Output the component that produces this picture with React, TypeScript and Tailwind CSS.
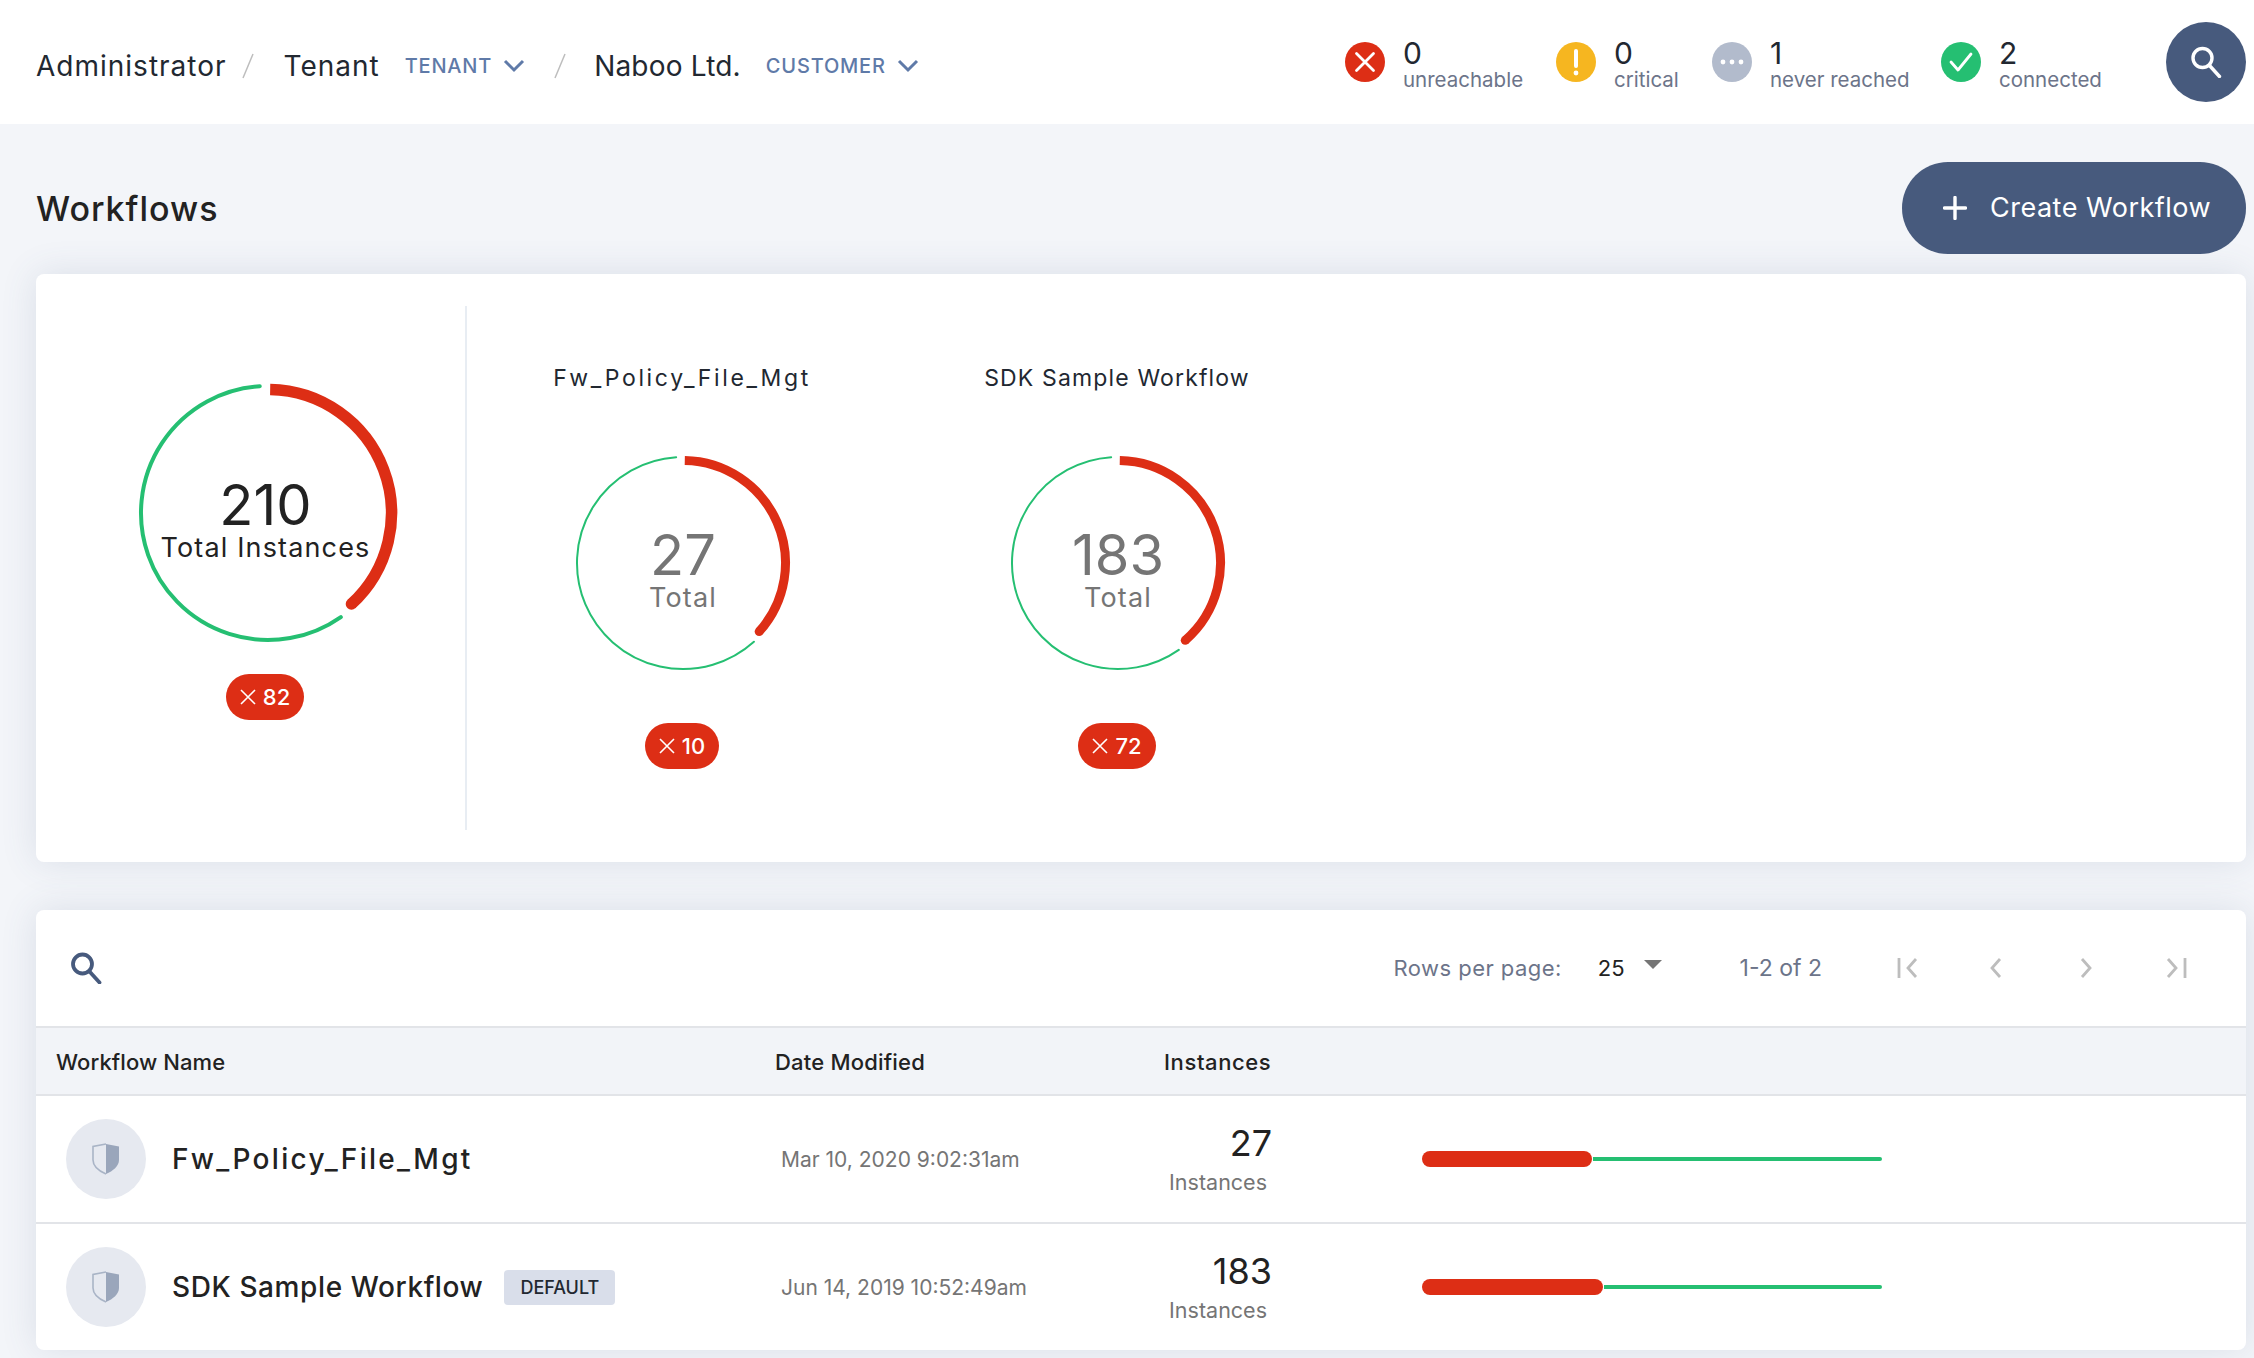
const FONT = "font-['Inter','Noto_Sans',sans-serif]"

const RED = "#dd2e15"
const GREEN = "#25bf72"

function polar(c: number, r: number, deg: number) {
  const a = ((deg - 90) * Math.PI) / 180
  return { x: c + r * Math.cos(a), y: c + r * Math.sin(a) }
}

function arc(c: number, r: number, from: number, to: number) {
  const s = polar(c, r, from)
  const e = polar(c, r, to)
  const large = to - from > 180 ? 1 : 0
  return `M ${s.x} ${s.y} A ${r} ${r} 0 ${large} 1 ${e.x} ${e.y}`
}

function Donut({
  size,
  greenR,
  greenW,
  redR,
  redW,
  redEnd,
  greenStart,
  value,
  label,
  big,
}: {
  size: number
  greenR: number
  greenW: number
  redR: number
  redW: number
  redEnd: number
  greenStart: number
  value: string
  label: string
  big?: boolean
}) {
  const c = size / 2
  const tip = polar(c, redR, redEnd)
  return (
    <div className="relative shrink-0" style={{ width: size, height: size }}>
      <svg width={size} height={size} viewBox={`0 0 ${size} ${size}`} fill="none">
        <path d={arc(c, greenR, greenStart, 356.3)} stroke={GREEN} strokeWidth={greenW} strokeLinecap="round" />
        <path d={arc(c, redR, 1, redEnd)} stroke={RED} strokeWidth={redW} />
        <circle cx={tip.x} cy={tip.y} r={redW / 2} fill={RED} />
      </svg>
      <div
        className={`absolute inset-0 flex flex-col items-center justify-center pt-[14px] ${
          big ? "text-[#222222] pr-[5px]" : "text-[#757575]"
        }`}
      >
        <div className="text-[56px] leading-[56px]">{value}</div>
        <div className="text-[27px] leading-[30px] tracking-[1.15px]">{label}</div>
      </div>
    </div>
  )
}

function FailBadge({ count }: { count: string }) {
  return (
    <div className="flex items-center justify-center gap-[7px] h-[46px] px-[14px] rounded-[23px] bg-[#dd2e15] text-white text-[22px] font-medium">
      <svg width="16" height="16" viewBox="0 0 16 16" fill="none" stroke="white" strokeWidth="1.6">
        <path d="M1 1 L15 15 M15 1 L1 15" />
      </svg>
      {count}
    </div>
  )
}

function SearchGlyph({ size, color, width }: { size: number; color: string; width: number }) {
  return (
    <svg width={size} height={size} viewBox="0 0 32 32" fill="none" stroke={color} strokeWidth={width}>
      <circle cx="12.5" cy="12" r="9.5" />
      <path d="M19.5 19.5 L29.5 30.5" strokeLinecap="round" />
    </svg>
  )
}

function Shield() {
  return (
    <svg width="28" height="32" viewBox="0 0 28 32" fill="none">
      <path d="M14 1 L27 3.5 V17 C27 23 21 28 14 31 Z" fill="#9aa6bb" />
      <path d="M14 1 L1 3.5 V17 C1 23 7 28 14 31" stroke="#a9b4c6" strokeWidth="1.6" />
    </svg>
  )
}

function StatusIcon({ kind }: { kind: string }) {
  if (kind === "red") {
    return (
      <svg width="40" height="40" viewBox="0 0 40 40" className="shrink-0">
        <circle cx="20" cy="20" r="20" fill={RED} />
        <path d="M11.5 11.5 L28.5 28.5 M28.5 11.5 L11.5 28.5" stroke="white" strokeWidth="2.8" strokeLinecap="round" />
      </svg>
    )
  }
  if (kind === "yellow") {
    return (
      <svg width="40" height="40" viewBox="0 0 40 40" className="shrink-0">
        <circle cx="20" cy="20" r="20" fill="#f6b620" />
        <path d="M20 9 V24" stroke="white" strokeWidth="4" strokeLinecap="round" />
        <circle cx="20" cy="31" r="2.4" fill="white" />
      </svg>
    )
  }
  if (kind === "grey") {
    return (
      <svg width="40" height="40" viewBox="0 0 40 40" className="shrink-0">
        <circle cx="20" cy="20" r="20" fill="#b2bbcc" />
        <circle cx="11" cy="20" r="2.4" fill="white" />
        <circle cx="20" cy="20" r="2.4" fill="white" />
        <circle cx="29" cy="20" r="2.4" fill="white" />
      </svg>
    )
  }
  return (
    <svg width="40" height="40" viewBox="0 0 40 40" className="shrink-0">
      <circle cx="20" cy="20" r="20" fill={GREEN} />
      <path d="M10 20 L17 28 L30 12" stroke="white" strokeWidth="2.8" fill="none" strokeLinecap="round" strokeLinejoin="round" />
    </svg>
  )
}

function Status({ kind, count, label, className }: { kind: string; count: string; label: string; className: string }) {
  return (
    <div className={`flex items-center ${className}`}>
      <StatusIcon kind={kind} />
      <div className="ml-[18px] mt-[5px]">
        <div className="text-[30px] leading-[30px] text-[#222831]">{count}</div>
        <div className="text-[20.5px] leading-[24px] text-[#6c7489] whitespace-nowrap">{label}</div>
      </div>
    </div>
  )
}

function Crumb({ name, tag, nameClass }: { name: string; tag?: string; nameClass: string }) {
  return (
    <div className="flex items-center">
      <span className={`text-[28px] text-[#222831] whitespace-nowrap ${nameClass}`}>{name}</span>
      {tag && (
        <>
          <span className="ml-[25px] text-[20px] font-medium tracking-[0.8px] text-[#5f7aa8]">{tag}</span>
          <svg width="22" height="14" viewBox="0 0 22 14" fill="none" stroke="#5f7aa8" strokeWidth="3" className="ml-[11px]">
            <path d="M2 2 L11 11 L20 2" />
          </svg>
        </>
      )}
    </div>
  )
}

function Slash({ className }: { className: string }) {
  return (
    <svg width="12" height="26" viewBox="0 0 12 26" fill="none" stroke="#bdbdbd" strokeWidth="1.5" className={className}>
      <path d="M11 1 L1 25" />
    </svg>
  )
}

function PageIcon({ path, className }: { path: string; className?: string }) {
  return (
    <svg width="24" height="24" viewBox="0 0 24 24" fill="none" stroke="#bdbdbd" strokeWidth="2.8" className={className}>
      <path d={path} />
    </svg>
  )
}

function Row({
  name,
  date,
  count,
  redWidth,
  nameClass,
  tag,
  last,
}: {
  name: string
  date: string
  count: string
  redWidth: number
  nameClass: string
  tag?: boolean
  last?: boolean
}) {
  return (
    <div className={last ? "flex items-center h-[126px]" : "flex items-center h-[128px] border-b-2 border-[#e2e4e8]"}>
      <div className="flex items-center w-[745px] pl-[30px]">
        <div className="flex items-center justify-center w-[80px] h-[80px] rounded-full bg-[#e6e9f0]">
          <Shield />
        </div>
        <span className={`ml-[26px] text-[28px] font-medium text-[#222222] ${nameClass}`}>{name}</span>
        {tag && (
          <span className="ml-[21px] flex items-center h-[35px] px-[16px] rounded-[4px] bg-[#d9deea] text-[18px] font-medium text-[#222831]">
            DEFAULT
          </span>
        )}
      </div>
      <div className="w-[387px] pt-[1px] text-[21px] text-[#757575] whitespace-nowrap">{date}</div>
      <div className="w-[104px] flex flex-col items-end">
        <div className="-mt-[2px] text-[36px] leading-[42px] text-[#222222]">{count}</div>
        <div className="mt-[5px] mr-[5px] text-[21.5px] leading-[26px] text-[#757575]">Instances</div>
      </div>
      <div className="ml-[150px] w-[460px] flex items-center">
        <div className="h-[16px] rounded-[8px] bg-[#dd2e15]" style={{ width: redWidth }} />
        <div className="ml-[1px] flex-1 h-[4px] rounded-r-[2px] bg-[#25bf72]" />
      </div>
    </div>
  )
}

export default function App() {
  return (
    <div className={`${FONT} min-h-screen bg-[#f3f5f9]`}>
      <header className="flex items-center h-[124px] pl-[36px] pr-[8px] bg-white">
        <div className="flex items-center mt-[8px]">
          <Crumb name="Administrator" nameClass="tracking-[1px]" />
          <Slash className="ml-[15px]" />
          <div className="ml-[30px]">
            <Crumb name="Tenant" tag="TENANT" nameClass="tracking-[1px]" />
          </div>
          <Slash className="ml-[29px]" />
          <div className="ml-[28px]">
            <Crumb name="Naboo Ltd." tag="CUSTOMER" nameClass="tracking-[0.2px]" />
          </div>
        </div>
        <div className="ml-auto flex items-center">
          <Status kind="red" count="0" label="unreachable" className="w-[211px]" />
          <Status kind="yellow" count="0" label="critical" className="w-[156px]" />
          <Status kind="grey" count="1" label="never reached" className="w-[229px]" />
          <Status kind="green" count="2" label="connected" className="w-[225px]" />
          <button className="flex items-center justify-center w-[80px] h-[80px] rounded-full bg-[#475a7d]">
            <SearchGlyph size={32} color="white" width={3.4} />
          </button>
        </div>
      </header>

      <div className="flex items-center justify-between h-[150px] pt-[18px] pl-[36px] pr-[8px]">
        <h1 className="text-[34px] font-medium tracking-[1px] text-[#222222]">Workflows</h1>
        <button className="flex items-center h-[92px] w-[344px] pl-[41px] rounded-[46px] bg-[#475a7d] text-white text-[27px] tracking-[0.5px]">
          <svg width="24" height="24" viewBox="0 0 24 24" stroke="white" strokeWidth="3.4" strokeLinecap="round">
            <path d="M12 1.5 V22.5 M1.5 12 H22.5" />
          </svg>
          <span className="ml-[23px] pt-[1px] whitespace-nowrap">Create Workflow</span>
        </button>
      </div>

      <section className="flex ml-[36px] mr-[8px] h-[588px] py-[32px] rounded-[8px] bg-white shadow-[0_0_36px_rgba(71,90,125,0.14)]">
        <div className="w-[431px] pl-[102px] pt-[77px] border-r-2 border-[#e8edf3]">
          <div className="flex flex-col items-center w-[260px]">
            <Donut size={260} greenR={127} greenW={4} redR={123.5} redW={11.5} redEnd={137.5} greenStart={145} value="210" label="Total Instances" big />
            <div className="mt-[31px] mr-[6px]">
              <FailBadge count="82" />
            </div>
          </div>
        </div>
        <div className="flex ml-[65px] gap-[135px] pt-[57px]">
          <div className="flex flex-col items-center w-[300px]">
            <div className="text-[23px] leading-[30px] tracking-[2.65px] text-[#222831] whitespace-nowrap">Fw_Policy_File_Mgt</div>
            <div className="mt-[62px] ml-[2px]">
              <Donut size={216} greenR={106} greenW={2} redR={102.5} redW={9} redEnd={132} greenStart={138} value="27" label="Total" />
            </div>
            <div className="mt-[52px]">
              <FailBadge count="10" />
            </div>
          </div>
          <div className="flex flex-col items-center w-[300px]">
            <div className="text-[23px] leading-[30px] tracking-[1.15px] text-[#222831] whitespace-nowrap">SDK Sample Workflow</div>
            <div className="mt-[62px] ml-[2px]">
              <Donut size={216} greenR={106} greenW={2} redR={102.5} redW={9} redEnd={139} greenStart={145} value="183" label="Total" />
            </div>
            <div className="mt-[52px]">
              <FailBadge count="72" />
            </div>
          </div>
        </div>
      </section>

      <section className="mt-[48px] ml-[36px] mr-[8px] rounded-[8px] bg-white shadow-[0_0_36px_rgba(71,90,125,0.14)] overflow-hidden">
        <div className="flex items-center h-[118px] pl-[34px] pr-[58px] border-b-2 border-[#e2e4e8]">
          <SearchGlyph size={32} color="#475a7d" width={3.8} />
          <div className="ml-auto flex items-center">
            <span className="text-[22px] tracking-[0.45px] text-[#6c7489]">Rows per page:</span>
            <span className="ml-[36px] text-[22px] text-[#222222]">25</span>
            <svg width="18" height="10" viewBox="0 0 18 10" className="ml-[19px] -mt-[6px]">
              <path d="M0 0 H18 L9 9 Z" fill="#757575" />
            </svg>
            <span className="ml-[78px] text-[23px] text-[#6c7489]">1-2 of 2</span>
            <PageIcon path="M3 2 V22 M20 3 L12 12 L20 21" className="ml-[74px]" />
            <PageIcon path="M16 3 L8 12 L16 21" className="ml-[64px]" />
            <PageIcon path="M8 3 L16 12 L8 21" className="ml-[66px]" />
            <PageIcon path="M4 3 L12 12 L4 21 M21 2 V22" className="ml-[66px]" />
          </div>
        </div>
        <div className="flex items-center h-[68px] pt-[2px] pl-[20px] bg-[#f2f4f8] border-b-2 border-[#e2e4e8] text-[22px] font-medium text-[#222222]">
          <div className="w-[719px] tracking-[0.1px]">Workflow Name</div>
          <div className="w-[389px] tracking-[0.2px]">Date Modified</div>
          <div className="tracking-[0.6px]">Instances</div>
        </div>
        <Row name="Fw_Policy_File_Mgt" date="Mar 10, 2020 9:02:31am" count="27" redWidth={170} nameClass="tracking-[2.3px]" />
        <Row name="SDK Sample Workflow" date="Jun 14, 2019 10:52:49am" count="183" redWidth={181} nameClass="tracking-[0.6px]" tag last />
      </section>
    </div>
  )
}
